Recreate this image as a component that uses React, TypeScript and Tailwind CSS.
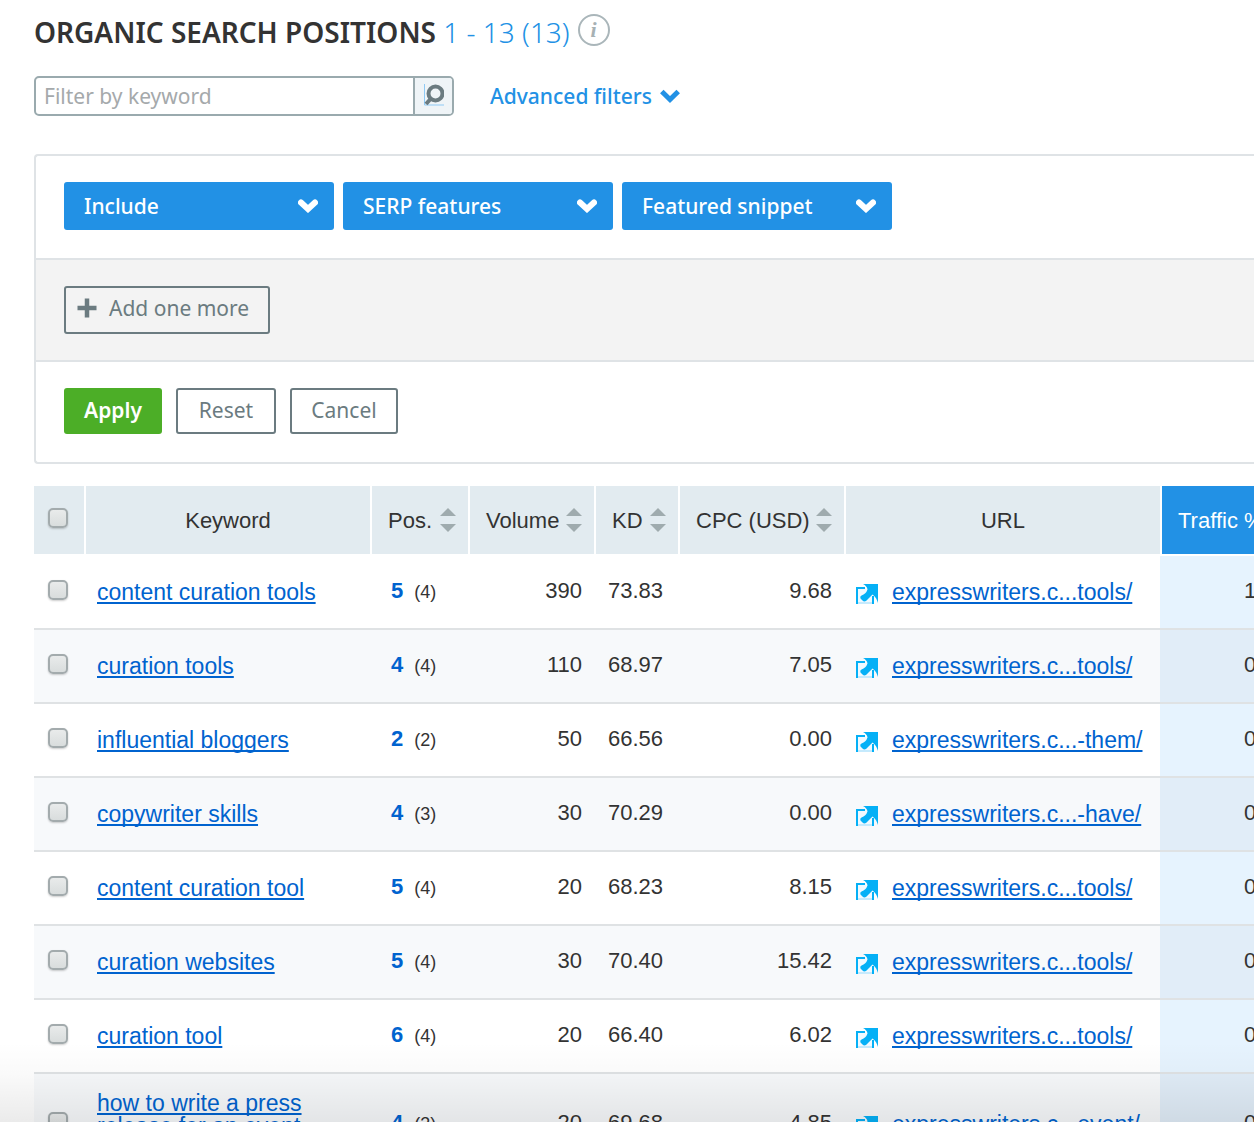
import React from 'react';

type Row = {
  keyword: string;
  pos: number;
  prev: number;
  volume: string;
  kd: string;
  cpc: string;
  url: string;
  traffic: string;
};

const rows: Row[] = [
  { keyword: 'content curation tools', pos: 5, prev: 4, volume: '390', kd: '73.83', cpc: '9.68', url: 'expresswriters.c...tools/', traffic: '1' },
  { keyword: 'curation tools', pos: 4, prev: 4, volume: '110', kd: '68.97', cpc: '7.05', url: 'expresswriters.c...tools/', traffic: '0' },
  { keyword: 'influential bloggers', pos: 2, prev: 2, volume: '50', kd: '66.56', cpc: '0.00', url: 'expresswriters.c...-them/', traffic: '0' },
  { keyword: 'copywriter skills', pos: 4, prev: 3, volume: '30', kd: '70.29', cpc: '0.00', url: 'expresswriters.c...-have/', traffic: '0' },
  { keyword: 'content curation tool', pos: 5, prev: 4, volume: '20', kd: '68.23', cpc: '8.15', url: 'expresswriters.c...tools/', traffic: '0' },
  { keyword: 'curation websites', pos: 5, prev: 4, volume: '30', kd: '70.40', cpc: '15.42', url: 'expresswriters.c...tools/', traffic: '0' },
  { keyword: 'curation tool', pos: 6, prev: 4, volume: '20', kd: '66.40', cpc: '6.02', url: 'expresswriters.c...tools/', traffic: '0' },
  { keyword: 'how to write a press release for an event', pos: 4, prev: 3, volume: '20', kd: '69.68', cpc: '4.85', url: 'expresswriters.c...event/', traffic: '0' },
];

const linkClass =
  'text-[23px] leading-[23px] text-[#0063cf] underline decoration-2 underline-offset-2 [text-decoration-skip-ink:none]';

function Checkbox({ label }: { label: string }) {
  return (
    <input
      type="checkbox"
      aria-label={label}
      className="block size-5 appearance-none rounded-[5px] border-2 border-[#a3abad] bg-linear-to-b from-[#e9ebeb] to-[#d9dddd] shadow-[0_1px_2px_rgba(0,0,0,0.2)] checked:bg-[#2291e5]"
    />
  );
}

function SortIcon() {
  return (
    <svg width="16" height="24" viewBox="0 0 16 24" fill="#9fabae" aria-hidden="true" className="shrink-0">
      <path d="M8 0 L16 8 H0 Z" />
      <path d="M0 16 H16 L8 24 Z" />
    </svg>
  );
}

function ExternalIcon() {
  return (
    <svg width="22" height="20" viewBox="0 0 22 20" fill="none" aria-hidden="true" className="shrink-0">
      <path d="M9 4 H1 V20 H17 V12 Z" fill="#f1f9ff" />
      <path d="M9 4 H1 V20" stroke="#05b0f6" strokeWidth="2" />
      <path d="M17 12 V20" stroke="#05b0f6" strokeWidth="2" />
      <path d="M2 19 H16" stroke="#c5eafd" strokeWidth="2" />
      <path d="M7 0 H22 V19 C21 16 20 13 16.5 10.5 L10 17 Q8 18 6.5 16.5 L4.5 14.5 Q3.500 12.500 5.500 11.500 Q10 10 11.500 5.500 Q11 2 7 0 Z" fill="#05b0f6" />
    </svg>
  );
}

function Chevron({ round = false }: { round?: boolean }) {
  return (
    <svg width="20" height="14" viewBox="0 0 20 14" fill="none" aria-hidden="true" className="shrink-0">
      <path
        d={round ? 'M3 3.5 L10 10 L17 3.5' : 'M1.8 2.5 L10 10.5 L18.2 2.5'}
        stroke="currentColor"
        strokeWidth={round ? 6 : 5}
        strokeLinecap={round ? 'round' : 'butt'}
      />
    </svg>
  );
}

function FilterSelect({ label, value }: { label: string; value: string }) {
  return (
    <div className="relative w-[270px] text-white">
      <select
        aria-label={label}
        defaultValue={value}
        className="block h-12 w-full appearance-none rounded-[3px] bg-[#2291e5] pt-0.5 pr-12 pl-5 text-[21px] font-medium"
      >
        <option>{value}</option>
      </select>
      <span className="pointer-events-none absolute inset-y-0 right-4 flex items-center">
        <Chevron round />
      </span>
    </div>
  );
}

function Th({ children, sort = false }: { children: React.ReactNode; sort?: boolean }) {
  return (
    <th scope="col" className="h-[70px] border-b-2 border-l-2 border-white bg-[#e2ebf0] pr-3 pl-4 font-normal">
      <div className={sort ? 'flex items-center justify-between' : 'pt-0.5 pr-1 text-center'}>
        <span className={sort ? 'pt-0.5' : ''}>{children}</span>
        {sort && (
          <button type="button" aria-label="Sort column">
            <SortIcon />
          </button>
        )}
      </div>
    </th>
  );
}

export default function App() {
  const outline =
    'rounded-[3px] border-2 border-[#6b7b80] text-[#6b7b80] text-[21px] leading-[30px]';
  return (
    <main className="relative h-screen overflow-hidden bg-white pl-[34px] font-['Noto_Sans','Open_Sans',sans-serif] text-[#333]">
      <header className="flex h-[60px] items-center gap-2 text-[28px] leading-9 whitespace-nowrap">
        <h1 className="pt-1 font-semibold">
          ORGANIC SEARCH POSITIONS <span className="font-light text-[#2291e5]">1 - 13 (13)</span>
        </h1>
        <button
          type="button"
          aria-label="Information"
          className="flex size-8 items-center justify-center rounded-full border-2 border-[#aab6ba] bg-white font-['Liberation_Serif',serif] text-[22px] leading-none font-bold text-[#a7b1b4] italic"
        >
          i
        </button>
      </header>

      <div className="mt-4 flex items-center text-[21px]">
        <form className="flex h-10 w-[420px] overflow-hidden rounded-[5px] border-2 border-[#9aaaae]">
          <input
            type="text"
            aria-label="Filter by keyword"
            placeholder="Filter by keyword"
            className="min-w-0 flex-1 bg-transparent px-2 pt-0.5 outline-none placeholder:text-[#a5a9ab]"
          />
          <button
            type="button"
            aria-label="Search"
            className="flex w-[39px] items-center justify-center border-l-2 border-[#9aaaae] bg-[#eff4f7] pb-0.5"
          >
            <svg width="20" height="22" viewBox="0 0 20 22" fill="none" aria-hidden="true">
              <path d="M0.5 0 V21 H20" stroke="#8fcaf5" />
              <circle cx="11.500" cy="9.500" r="7" stroke="#6b7b80" strokeWidth="4" />
              <path d="M6.500 15 L2 20" stroke="#6b7b80" strokeWidth="4" />
            </svg>
          </button>
        </form>
        <button type="button" className="ml-9 flex items-center gap-2 font-medium text-[#2291e5]">
          <span className="pt-0.5">Advanced filters</span>
          <Chevron />
        </button>
      </div>

      <section className="mt-[38px] rounded-l-[4px] border-y-2 border-l-2 border-[#dfe3e6]">
        <div className="flex gap-[9px] px-7 pt-[26px] pb-7">
          <FilterSelect label="Mode" value="Include" />
          <FilterSelect label="Filter field" value="SERP features" />
          <FilterSelect label="Feature" value="Featured snippet" />
        </div>
        <div className="border-y-2 border-[#dfe3e6] bg-[#f3f3f3] px-7 py-[26px]">
          <button type="button" className={`${outline} flex h-12 w-[206px] items-center gap-3 pb-1 pl-[11px]`}>
            <svg width="20" height="20" viewBox="0 0 20 20" aria-hidden="true">
              <path d="M10 0.500 V19.500 M0.500 10 H19.500" stroke="#6b7b80" strokeWidth="4.500" />
            </svg>
            Add one more
          </button>
        </div>
        <div className="flex gap-[14px] px-7 pt-[26px] pb-7">
          <button type="button" className="h-[46px] w-[98px] rounded-[3px] bg-[#4cae27] text-[21px] font-semibold text-white">
            Apply
          </button>
          <button type="button" className={`${outline} h-[46px] w-[100px] pb-0.5`}>
            Reset
          </button>
          <button type="button" className={`${outline} h-[46px] w-[108px] pb-0.5`}>
            Cancel
          </button>
        </div>
      </section>

      <table className="mt-[22px] w-full table-fixed border-separate border-spacing-0 font-['Liberation_Sans',Arial,sans-serif] text-[22px] leading-6 whitespace-nowrap">
        <colgroup>
          <col className="w-[50px]" />
          <col className="w-[286px]" />
          <col className="w-[98px]" />
          <col className="w-[126px]" />
          <col className="w-[84px]" />
          <col className="w-[166px]" />
          <col className="w-[316px]" />
          <col />
        </colgroup>
        <thead>
          <tr>
            <th scope="col" className="h-[70px] border-b-2 border-white bg-[#e2ebf0] pb-1 pl-[14px]">
              <Checkbox label="Select all keywords" />
            </th>
            <Th>Keyword</Th>
            <Th sort>Pos.</Th>
            <Th sort>Volume</Th>
            <Th sort>KD</Th>
            <Th sort>CPC (USD)</Th>
            <Th>URL</Th>
            <th scope="col" className="border-b-2 border-l-2 border-white bg-[#2291e5] pt-0.5 pl-4 text-left font-normal text-white">
              Traffic %
            </th>
          </tr>
        </thead>
        <tbody className="[&_td]:border-b-2 [&_td]:border-[#dfe2e4]">
          {rows.map((r, i) => {
            const tall = i === rows.length - 1;
            return (
              <tr key={r.keyword} className={`${tall ? 'h-[102px]' : 'h-[74px]'} ${i % 2 ? 'bg-[#f7f9fb]' : ''}`}>
                <td className="pb-1 pl-[14px]">
                  <Checkbox label={`Select ${r.keyword}`} />
                </td>
                <td className={`pr-3 pl-[13px] leading-[22px] whitespace-normal ${tall ? 'pb-[18px]' : ''}`}>
                  <a href="#keyword" className={linkClass}>
                    {r.keyword}
                  </a>
                </td>
                <td className="pb-0.5 pl-[21px]">
                  <span className="font-bold text-[#0063cf]">{r.pos}</span>
                  <span className="ml-[11px] text-lg leading-6">({r.prev})</span>
                </td>
                <td className="pr-3 pb-0.5 text-right">{r.volume}</td>
                <td className="pb-0.5 pl-3.5">{r.kd}</td>
                <td className="pr-3 pb-0.5 text-right">{r.cpc}</td>
                <td className="pl-3">
                  <div className="flex items-center gap-[14px]">
                    <span className="pt-1">
                      <ExternalIcon />
                    </span>
                    <a href="#url" className={linkClass}>
                      {r.url}
                    </a>
                  </div>
                </td>
                <td className={`pb-0.5 pl-[84px] ${i % 2 ? 'bg-[#e1edf8]' : 'bg-[#e6f3fe]'}`}>{r.traffic}</td>
              </tr>
            );
          })}
        </tbody>
      </table>

      <div className="pointer-events-none absolute inset-x-0 bottom-0 h-20 bg-linear-to-b from-transparent via-black/[0.02] via-40% to-black/[0.08]" />
    </main>
  );
}
